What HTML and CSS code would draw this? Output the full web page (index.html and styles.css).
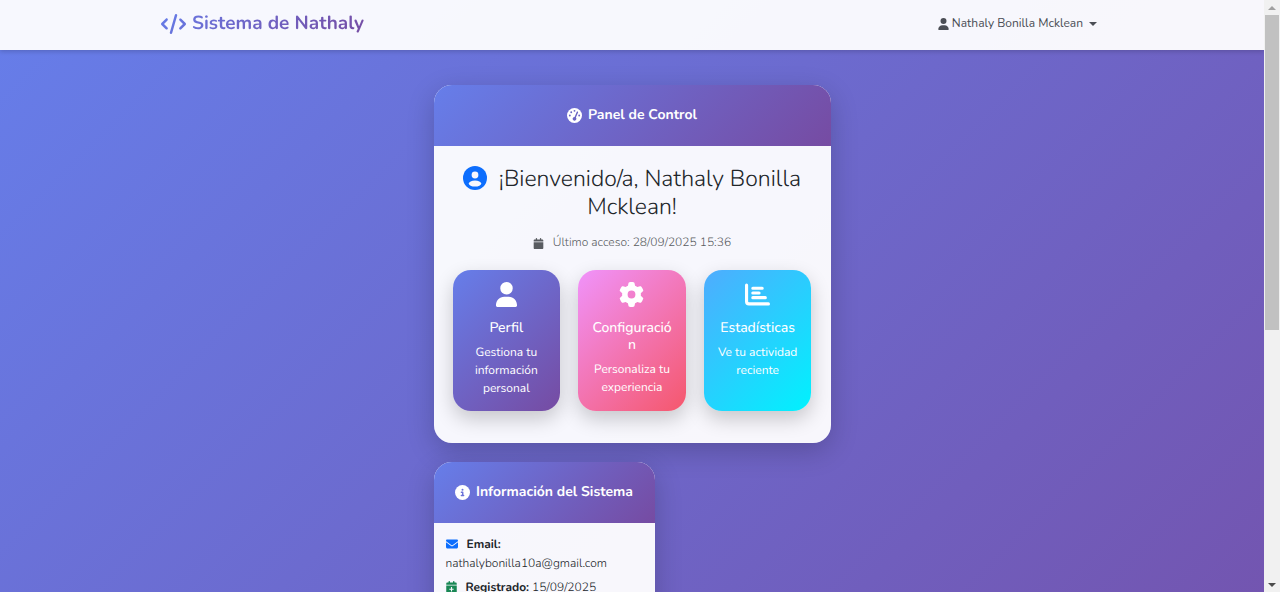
FILE: index.html
```html
<!DOCTYPE html>
<html lang="es">
<head>
<meta charset="utf-8">
<meta name="viewport" content="width=device-width, initial-scale=1">
<title>Sistema de Nathaly</title>
<link rel="stylesheet" href="styles.css">
</head>
<body>
<div class="viewport">
  <div class="page">
    <header class="navbar">
      <div class="navbar-inner">
        <a class="brand" href="#">
          <svg class="brand-icon" viewBox="0 0 640 512" aria-hidden="true">
            <defs><linearGradient id="brandFill" x1="0" y1="0" x2="1" y2="1"><stop offset="0" stop-color="#667eea"/><stop offset="1" stop-color="#696fd5"/></linearGradient></defs>
            <path fill="url(#brandFill)" d="M392.800 1.200c-17-4.900-34.700 5-39.600 22l-128 448c-4.900 17 5 34.700 22 39.600s34.700-5 39.600-22l128-448c4.900-17-5-34.700-22-39.600zm80.600 120.100c-12.500 12.500-12.500 32.800 0 45.300L562.700 256l-89.400 89.400c-12.500 12.500-12.500 32.800 0 45.300s32.800 12.500 45.300 0l112-112c12.500-12.500 12.500-32.800 0-45.300l-112-112c-12.500-12.500-32.800-12.500-45.300 0zm-306.700 0c-12.500-12.500-32.800-12.500-45.300 0l-112 112c-12.500 12.500-12.500 32.800 0 45.300l112 112c12.500 12.500 32.800 12.500 45.300 0s12.500-32.800 0-45.300L77.300 256l89.400-89.400c12.500-12.500 12.500-32.800 0-45.300z"/>
          </svg>
          <span class="brand-name">Sistema de Nathaly</span>
        </a>
        <button class="user-menu" type="button">
          <svg class="user-icon" viewBox="0 0 448 512" aria-hidden="true"><path fill="currentColor" d="M224 256A128 128 0 1 0 224 0a128 128 0 1 0 0 256zm-45.700 48C79.800 304 0 383.800 0 482.300C0 498.700 13.300 512 29.700 512h388.600c16.400 0 29.700-13.300 29.700-29.700C448 383.800 368.200 304 269.700 304z"/></svg>
          <span>Nathaly Bonilla Mcklean</span>
          <span class="caret"></span>
        </button>
      </div>
    </header>
    <main class="content">
      <section class="card">
        <h2 class="card-header">
          <svg class="header-icon" viewBox="0 0 512 512" aria-hidden="true"><circle cx="256" cy="256" r="256" fill="#fff"/><g fill="#6a63c4"><circle cx="256" cy="96" r="32"/><circle cx="144" cy="144" r="32"/><circle cx="96" cy="256" r="32"/><circle cx="416" cy="256" r="32"/><path d="M366 119c12 5 18 19 13 32l-76 174c11 11 17 26 17 43 0 35-29 64-64 64s-64-29-64-64 29-64 64-64h3l76-172c5-12 19-18 31-13z"/></g></svg>
          <span>Panel de Control</span>
        </h2>
        <div class="card-body">
          <h1 class="welcome">
            <svg class="avatar" viewBox="0 0 24 24" aria-hidden="true"><circle cx="12" cy="12" r="12" fill="#0d6efd"/><circle cx="12" cy="9" r="3.400" fill="#f7f7fd"/><ellipse cx="12" cy="17.600" rx="6.200" ry="3" fill="#f7f7fd"/></svg>
            ¡Bienvenido/a, Nathaly Bonilla Mcklean!
          </h1>
          <p class="last-access">
            <svg class="calendar" viewBox="0 0 448 512" aria-hidden="true"><path fill="currentColor" d="M96 32v32H48C21 64 0 85 0 112v48h448v-48c0-27-21-48-48-48h-48V32c0-18-14-32-32-32s-32 14-32 32v32H160V32c0-18-14-32-32-32S96 14 96 32zm352 160H0v272c0 27 21 48 48 48h352c27 0 48-21 48-48z"/></svg>
            <span>Último acceso: 28/09/2025 15:36</span>
          </p>
          <div class="tiles">
            <a class="tile tile-profile" href="#">
              <svg class="tile-icon" viewBox="0 0 512 512" aria-hidden="true"><path fill="currentColor" d="M256 256A128 128 0 1 0 256 0a128 128 0 1 0 0 256zm-45.700 48C111.800 304 40 383.800 40 482.300 40 498.700 53.300 512 69.700 512h372.600c16.400 0 29.700-13.300 29.700-29.700C472 383.800 400.200 304 301.700 304z"/></svg>
              <h3 class="tile-title">Perfil</h3>
              <p class="tile-text">Gestiona tu información personal</p>
            </a>
            <a class="tile tile-settings" href="#">
              <svg class="tile-icon" viewBox="0 0 512 512" aria-hidden="true"><path fill="currentColor" d="M495.900 166.600c3.200 8.700 .5 18.400-6.400 24.600l-43.300 39.400c1.100 8.300 1.700 16.800 1.700 25.400s-.6 17.100-1.700 25.400l43.300 39.400c6.900 6.200 9.600 15.900 6.400 24.600c-4.400 11.900-9.700 23.300-15.800 34.300l-4.700 8.100c-6.600 11-14 21.400-22.100 31.200c-5.900 7.200-15.700 9.600-24.500 6.800l-55.700-17.700c-13.400 10.300-28.200 18.900-44 25.400l-12.500 57.100c-2 9.100-9 16.300-18.200 17.800c-13.800 2.300-28 3.500-42.500 3.500s-28.700-1.200-42.500-3.500c-9.200-1.500-16.200-8.700-18.200-17.800l-12.500-57.100c-15.800-6.500-30.600-15.100-44-25.400L83.100 425.900c-8.800 2.800-18.600 .3-24.500-6.800c-8.100-9.800-15.500-20.200-22.100-31.200l-4.700-8.100c-6.100-11-11.400-22.400-15.800-34.300c-3.200-8.700-.5-18.400 6.400-24.600l43.300-39.400C64.600 273.100 64 264.600 64 256s.6-17.100 1.700-25.400L22.400 191.200c-6.900-6.200-9.600-15.900-6.400-24.600c4.400-11.900 9.700-23.300 15.800-34.300l4.700-8.100c6.600-11 14-21.400 22.100-31.200c5.900-7.200 15.700-9.600 24.500-6.800l55.700 17.700c13.400-10.300 28.200-18.900 44-25.400l12.500-57.100c2-9.100 9-16.300 18.200-17.800C227.300 1.200 241.500 0 256 0s28.700 1.200 42.500 3.500c9.200 1.500 16.200 8.700 18.200 17.800l12.500 57.100c15.800 6.500 30.600 15.100 44 25.400l55.700-17.700c8.800-2.800 18.600-.3 24.500 6.800c8.100 9.800 15.500 20.200 22.100 31.200l4.700 8.100c6.100 11 11.400 22.400 15.800 34.300zM256 336a80 80 0 1 0 0-160 80 80 0 1 0 0 160z"/></svg>
              <h3 class="tile-title">Configuración</h3>
              <p class="tile-text">Personaliza tu experiencia</p>
            </a>
            <a class="tile tile-stats" href="#">
              <svg class="tile-icon" viewBox="0 0 512 512" aria-hidden="true"><g fill="none" stroke="currentColor" stroke-width="64" stroke-linecap="round" stroke-linejoin="round"><path d="M32 64v336q0 48 48 48h400M160 128h192M160 224h128M160 320h256"/></g></svg>
              <h3 class="tile-title">Estadísticas</h3>
              <p class="tile-text">Ve tu actividad reciente</p>
            </a>
          </div>
        </div>
      </section>
      <section class="card card-info">
        <h2 class="card-header">
          <svg class="header-icon" viewBox="0 0 512 512" aria-hidden="true"><circle cx="256" cy="256" r="256" fill="#fff"/><g fill="#6a71d8"><circle cx="256" cy="160" r="34"/><path d="M216 224h48c13 0 24 11 24 24v88h8c13 0 24 11 24 24s-11 24-24 24h-80c-13 0-24-11-24-24s11-24 24-24h24v-64h-24c-13 0-24-11-24-24s11-24 24-24z"/></g></svg>
          <span>Información del Sistema</span>
        </h2>
        <div class="info-body">
          <p class="info-row"><svg class="info-icon mail" viewBox="0 0 512 512" aria-hidden="true"><path fill="currentColor" d="M48 64C21.500 64 0 85.500 0 112c0 15.100 7.100 29.300 19.200 38.400L236.800 313.600c11.400 8.500 27 8.500 38.400 0L492.800 150.400c12.100-9.100 19.200-23.300 19.200-38.400c0-26.500-21.500-48-48-48zM0 176v208c0 35.300 28.700 64 64 64h384c35.300 0 64-28.700 64-64V176L294.400 339.200c-22.800 17.100-54 17.100-76.800 0z"/></svg><strong>Email:</strong> nathalybonilla10a@gmail.com</p>
          <p class="info-row"><svg class="info-icon date" viewBox="0 0 448 512" aria-hidden="true"><path fill="currentColor" fill-rule="evenodd" d="M96 32v32H48C21 64 0 85 0 112v48h448v-48c0-27-21-48-48-48h-48V32c0-18-14-32-32-32s-32 14-32 32v32H160V32c0-18-14-32-32-32S96 14 96 32zm352 160H0v272c0 27 21 48 48 48h352c27 0 48-21 48-48zM200 260h48v68h68v48h-68v68h-48v-68h-68v-48h68z"/></svg><strong>Registrado:</strong> 15/09/2025</p>
        </div>
      </section>
    </main>
  </div>
  <div class="scrollbar" aria-hidden="true">
    <span class="arrow arrow-up"></span>
    <span class="track"><span class="thumb"></span></span>
    <span class="arrow arrow-down"></span>
  </div>
</div>
</body>
</html>
```
FILE: styles.css
```css
* { box-sizing: border-box; }

body {
  margin: 0;
  font-family: Nunito, Lato, "Open Sans", sans-serif;
  font-size: 12px;
  line-height: 19px;
  color: #212529;
  text-rendering: geometricPrecision;
}

h1, h2, h3, p { margin: 0; }
svg { flex: none; }

.viewport {
  display: flex;
  align-items: flex-start;
  height: 100vh;
  overflow: hidden;
}

.page {
  flex: 1;
  min-width: 0;
  min-height: 178vh;
  background: linear-gradient(135deg, #667eea 0%, #764ba2 100%);
}

.navbar {
  padding: 8px 0;
  background: rgba(255, 255, 255, .95);
  box-shadow: 0 2px 4px rgba(0, 0, 0, .15);
}

.navbar-inner {
  display: flex;
  align-items: center;
  justify-content: space-between;
  max-width: 960px;
  min-height: 34px;
  margin: 0 auto;
  padding: 0 15px 3px 9px;
}

.brand {
  display: flex;
  align-items: center;
  gap: 6px;
  text-decoration: none;
  font-size: 19px;
  line-height: 31px;
  font-weight: 700;
}

.brand-icon { width: 25px; height: 20px; }

.brand-name {
  background: linear-gradient(135deg, #6a74dc, #764ba2);
  background-clip: text;
  -webkit-background-clip: text;
  color: transparent;
}

.user-menu {
  display: flex;
  align-items: center;
  gap: 3px;
  padding: 0;
  border: 0;
  background: none;
  font: inherit;
  color: #4b4e55;
}

.user-icon { width: 11px; height: 12px; }

.caret {
  margin-left: 3px;
  border: 4px solid transparent;
  border-top-color: currentColor;
  border-bottom: 0;
}

.content {
  display: flex;
  flex-direction: column;
  gap: 19px;
  width: 397px;
  max-width: 100%;
  margin: 0 auto;
  padding-top: 35px;
}

.card {
  border-radius: 18px;
  overflow: hidden;
  background: rgba(255, 255, 255, .95);
  box-shadow: 0 8px 28px rgba(0, 0, 0, .2), inset 0 0 0 1px rgba(255, 255, 255, .2);
}

.card-header {
  display: flex;
  align-items: center;
  justify-content: center;
  gap: 6px;
  padding: 18px 12px 19px;
  background: linear-gradient(135deg, #667eea, #764ba2);
  color: #fff;
  font-size: 14px;
  line-height: 24px;
  font-weight: 700;
}

.header-icon { width: 15px; height: 15px; }

.card-body { padding: 20px 19px 32px; text-align: center; }

.welcome {
  font-size: 23px;
  line-height: 28px;
  font-weight: 350;
}

.avatar { width: 24px; height: 24px; margin-right: 6px; vertical-align: -4px; }

.last-access {
  display: flex;
  align-items: center;
  justify-content: center;
  gap: 9px;
  margin: 12px 0 17px;
  color: #595c61;
  font-weight: 300;
}

.calendar { width: 11px; height: 11px; }

.tiles {
  display: grid;
  grid-template-columns: repeat(3, minmax(0, 1fr));
  gap: 18px;
}

.tile {
  min-height: 141px;
  padding: 12px;
  border-radius: 18px;
  color: #fff;
  text-decoration: none;
  box-shadow: 0 8px 20px rgba(0, 0, 0, .2);
}

.tile-profile { background: linear-gradient(135deg, #667eea, #764ba2); }
.tile-settings { background: linear-gradient(135deg, #f093fb, #f5576c); }
.tile-stats { background: linear-gradient(135deg, #4facfe, #00f2fe); }

.tile-icon { display: block; width: 25px; height: 25px; margin: 0 auto 12px; }

.tile-title {
  margin-bottom: 8px;
  font-size: 14px;
  line-height: 17px;
  font-weight: 500;
  overflow-wrap: anywhere;
}

.tile-text { line-height: 18px; }

.card-info { align-self: flex-start; width: 221px; }
.info-body { padding: 13px 12px 18px; }
.info-row { margin-bottom: 5px; font-weight: 300; }
.info-row strong { font-weight: 700; }
.info-icon { height: 12px; margin-right: 9px; vertical-align: -2px; }
.mail { width: 12px; color: #0d6efd; }
.date { width: 11px; color: #198754; }

.scrollbar {
  display: flex;
  flex-direction: column;
  width: 16px;
  height: 100vh;
  background: #f1f1f1;
}

.arrow { display: grid; place-items: center; height: 15px; }
.arrow::before { content: ""; border: 4px solid transparent; }
.arrow-up::before { border-top: 0; border-bottom-color: #a0a0a0; }
.arrow-down::before { border-bottom: 0; border-top-color: #4c4c4c; }
.track { flex: 1; padding: 0 1px; }
.thumb { display: block; height: 56%; background: #c1c1c1; }
```
